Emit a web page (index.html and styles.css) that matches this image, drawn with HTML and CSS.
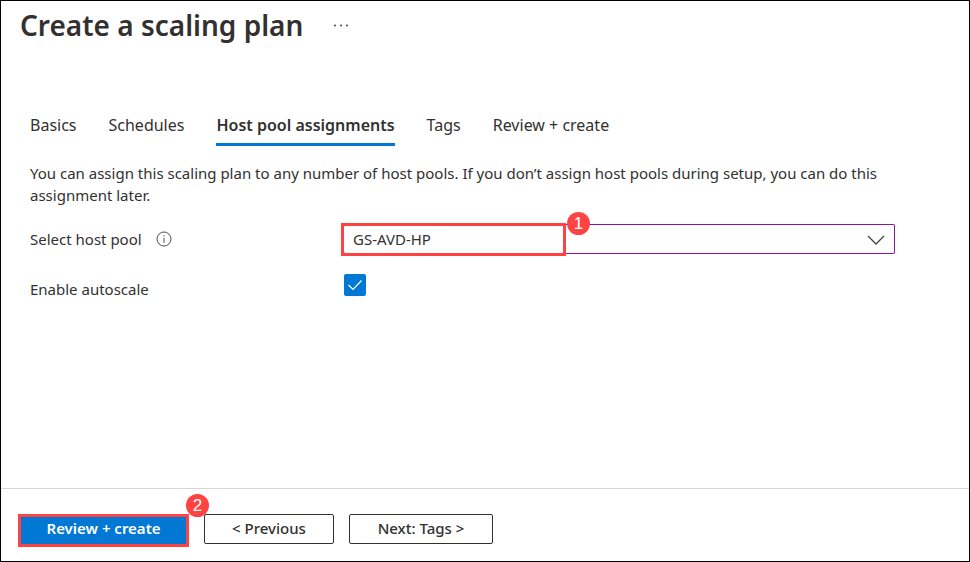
FILE: index.html
```html
<!DOCTYPE html>
<html lang="en">
<head>
<meta charset="utf-8">
<title>Create a scaling plan</title>
<link rel="stylesheet" href="styles.css">
</head>
<body>
<div class="page">
  <header class="header">
    <h1 class="title">Create a scaling plan</h1>
    <button class="more" type="button" aria-label="More actions">
      <svg width="16" height="4" viewBox="0 0 16 4" fill="#444"><circle cx="2" cy="2.500" r="1"/><circle cx="8" cy="2.500" r="1"/><circle cx="14" cy="2.500" r="1"/></svg>
    </button>
  </header>
  <main class="content">
    <nav class="tabs">
      <a class="tab" href="#basics">Basics</a>
      <a class="tab" href="#schedules">Schedules</a>
      <a class="tab tab-active" href="#hostpools" aria-current="page">Host pool assignments</a>
      <a class="tab" href="#tags">Tags</a>
      <a class="tab" href="#review">Review + create</a>
    </nav>
    <p class="intro">You can assign this scaling plan to any number of host pools. If you don’t assign host pools during setup, you can do this assignment later.</p>
    <div class="row">
      <div class="label-cell">
        <label for="pool">Select host pool</label>
        <svg width="16" height="16" viewBox="0 0 16 16" fill="none" stroke="#505050"><circle cx="8" cy="8" r="7"/><path d="M8 6.8V12M8 4.2V5.4"/></svg>
      </div>
      <div class="select-wrap">
        <select id="pool" class="select"><option>GS-AVD-HP</option></select>
        <svg class="chevron" width="18" height="10" viewBox="0 0 18 10" fill="none" stroke="#444" stroke-width="1.3"><path d="M1 1l8 8 8-8"/></svg>
        <span class="outline outline-field"><span class="step">1</span></span>
      </div>
    </div>
    <div class="row">
      <label for="autoscale">Enable autoscale</label>
      <div class="check-wrap">
        <input id="autoscale" class="check" type="checkbox" checked>
        <svg class="tick" width="22" height="22" viewBox="0 0 22 22" fill="none" stroke="#fff" stroke-width="1.2"><path d="M4.500 11l4.500 4.500 8.500-9"/></svg>
      </div>
    </div>
  </main>
  <footer class="footer">
    <div class="primary-wrap">
      <button class="button button-primary" type="button">Review + create</button>
      <span class="outline outline-button"><span class="step">2</span></span>
    </div>
    <button class="button button-previous" type="button">&lt; Previous</button>
    <button class="button button-next" type="button">Next: Tags &gt;</button>
  </footer>
</div>
</body>
</html>
```
FILE: styles.css
```css
* { box-sizing: border-box; }
body {
  margin: 0;
  background: #fff;
  color: #323130;
  font: 15px/22px "Noto Sans", "Open Sans", sans-serif;
}
.page {
  display: flex;
  flex-direction: column;
  min-height: 100vh;
  border: 1px solid #000;
}
.header {
  display: flex;
  align-items: center;
  gap: 30px;
  padding: 4px 19px 0;
}
.title {
  margin: 0;
  font-size: 28px;
  line-height: 40px;
  font-weight: 600;
}
.more {
  display: flex;
  padding: 0;
  border: 0;
  background: none;
}
.content {
  flex: 1;
  padding: 69px 74px 24px 29px;
}
.tabs {
  display: flex;
  gap: 32px;
}
.tab {
  padding-bottom: 7px;
  border-bottom: 3px solid transparent;
  color: inherit;
  font-size: 16px;
  line-height: 22px;
  text-decoration: none;
  white-space: nowrap;
}
.tab-active {
  border-bottom-color: #0078d4;
  font-weight: 600;
}
.intro {
  margin: 16px 0 18px;
}
.row {
  display: grid;
  grid-template-columns: 314px 1fr;
  align-items: center;
  margin-bottom: 20px;
}
.label-cell {
  display: flex;
  align-items: center;
  gap: 14px;
}
.select-wrap, .check-wrap, .primary-wrap {
  position: relative;
}
.select {
  display: block;
  width: 100%;
  height: 30px;
  padding: 0 9px;
  appearance: none;
  border: 1px solid #881798;
  border-left: 0;
  border-radius: 2px;
  background: #fff;
  color: inherit;
  font: inherit;
}
.chevron {
  position: absolute;
  top: 11px;
  right: 10px;
  pointer-events: none;
}
.outline {
  position: absolute;
  border: 3px solid #ff4343;
  pointer-events: none;
}
.outline-field {
  top: -1px;
  left: -3px;
  width: 225px;
  height: 33px;
}
.outline-button {
  inset: 0;
}
.step {
  position: absolute;
  top: -14px;
  right: -27px;
  width: 23px;
  height: 23px;
  border-radius: 50%;
  background: #ff4343;
  color: #fff;
  font: 17px/23px "Liberation Sans", sans-serif;
  text-align: center;
}
.outline-button .step {
  top: -23px;
  right: -23px;
}
.check-wrap {
  height: 30px;
}
.check {
  display: block;
  width: 22px;
  height: 22px;
  margin: 0;
  appearance: none;
  border-radius: 2px;
  background: #0078d4;
}
.tick {
  position: absolute;
  top: 0;
  left: 0;
  pointer-events: none;
}
.footer {
  display: flex;
  align-items: flex-start;
  gap: 15px;
  padding: 25px 17px 14px;
  border-top: 1px solid #d6d6d6;
}
.button {
  height: 30px;
  padding: 0 0 2px;
  border: 1px solid #323130;
  border-radius: 2px;
  background: #fff;
  color: #323130;
  font: 500 15px/20px "Noto Sans", "Open Sans", sans-serif;
}
.button-primary {
  display: block;
  width: 171px;
  height: 33px;
  padding-bottom: 5px;
  border: 0;
  background: #0078d4;
  color: #fff;
  font-weight: 600;
}
.button-previous { width: 130px; }
.button-next { width: 144px; }
```
